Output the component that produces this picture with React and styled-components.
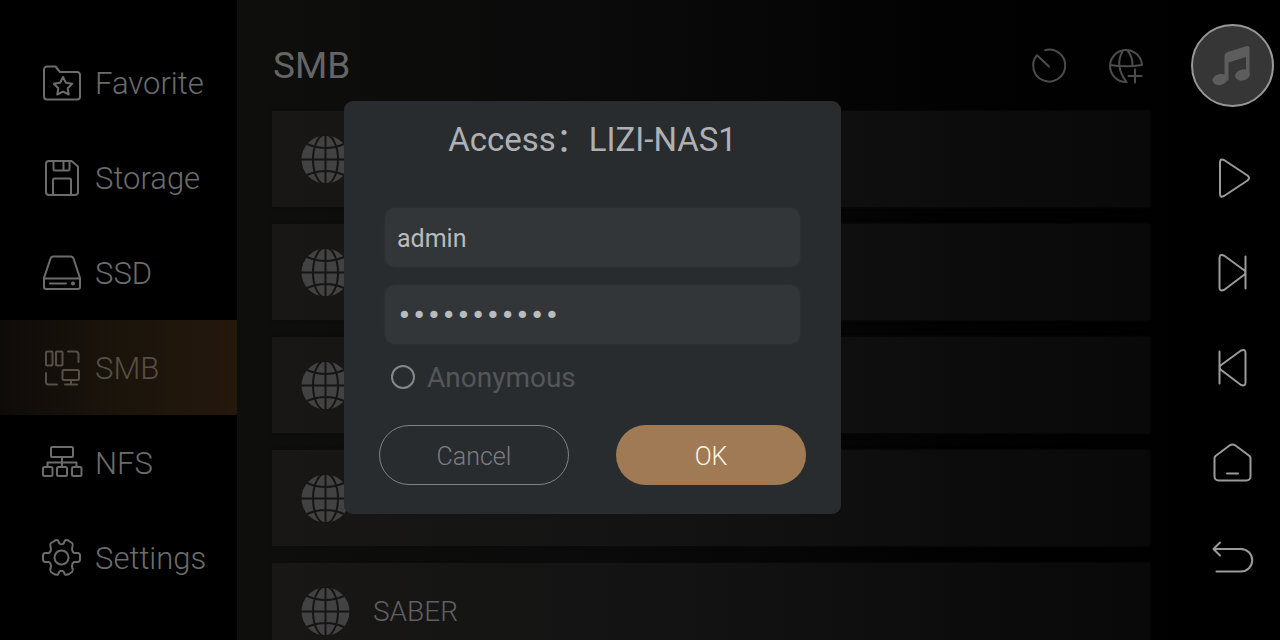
import React, { useState } from 'react';
import styled, { createGlobalStyle } from 'styled-components';

const GlobalStyle = createGlobalStyle`
  * {
    box-sizing: border-box;
  }

  body {
    margin: 0;
    background: #000;
    font-family: Roboto, 'Noto Sans CJK SC', sans-serif;
    font-weight: 300;
  }

  button,
  input {
    font: inherit;
  }
`;

const Screen = styled.div`
  display: flex;
  height: 100vh;
  overflow: hidden;
`;

const Content = styled.div`
  position: relative;
  display: flex;
  flex: 1;
  min-width: 0;
`;

const Sidebar = styled.nav`
  flex: 0 0 237px;
  padding-top: 35px;
`;

const NavItem = styled.a`
  display: flex;
  align-items: center;
  gap: 12px;
  height: 95px;
  padding-left: 41px;
  font-size: 31px;
  color: ${({ $active }) => ($active ? '#574e45' : '#6c6c6c')};
  background: ${({ $active }) => ($active ? 'linear-gradient(90deg, #0f0b09, #1a140b 50%, #25180d)' : 'none')};
  text-decoration: none;
`;

const NavLabel = styled.span`
  padding-top: 2px;
`;

const Icon = styled.svg`
  display: block;
  flex: none;
  fill: none;
  stroke: currentColor;
  stroke-width: 2;
  stroke-linecap: round;
  stroke-linejoin: round;
`;

const Main = styled.main`
  flex: 1;
  min-width: 0;
  padding: 0 35px;
  background: linear-gradient(90deg, #0e0e0d, #0a0a0a 40%, #020202 75%, #000);
`;

const Header = styled.header`
  display: flex;
  align-items: center;
  justify-content: space-between;
  height: 111px;
  padding: 20px 4px 0 1px;
`;

const Title = styled.h1`
  margin: 0;
  font-size: 37px;
  line-height: 46px;
  font-weight: 400;
  color: #656565;
`;

const Actions = styled.div`
  display: flex;
  gap: 37px;
`;

const IconButton = styled.button`
  display: flex;
  align-items: center;
  justify-content: center;
  padding: 0;
  border: 0;
  background: none;
  color: #4c4c4c;
  cursor: pointer;
`;

const List = styled.ul`
  display: flex;
  flex-direction: column;
  gap: 17px;
  margin: 0;
  padding: 0;
  list-style: none;
`;

const ListRow = styled.li`
  display: flex;
  align-items: center;
  gap: 23px;
  height: 96px;
  padding-left: 29px;
  font-size: 28px;
  color: #606060;
  background: linear-gradient(90deg, #181716, #131313 45%, #0b0b0b 85%, #090909);
  box-shadow: 0 0 3px #0e0e0e;
`;

const Dock = styled.aside`
  display: flex;
  flex-direction: column;
  flex: 0 0 95px;
`;

const DockButton = styled(IconButton)`
  height: 95px;
  color: #9a9a9a;
`;

const PlayerButton = styled(IconButton)`
  height: 130px;
`;

const Cover = styled.span`
  display: flex;
  align-items: center;
  justify-content: center;
  width: 83px;
  height: 83px;
  border: 2px solid #979797;
  border-radius: 50%;
  background: #363636;
  color: #5d5d5d;
`;

const Overlay = styled.div`
  position: absolute;
  inset: 0;
  display: flex;
  align-items: center;
  justify-content: center;
  padding-bottom: 25px;
`;

const Dialog = styled.form`
  width: 497px;
  padding: 17px 35px 29px;
  border-radius: 9px;
  background: #292c2f;
`;

const DialogTitle = styled.h2`
  margin: 0 0 46px;
  font-size: 33px;
  line-height: 44px;
  font-weight: 400;
  text-align: center;
  color: #aeb1b4;
`;

const Fields = styled.div`
  display: flex;
  flex-direction: column;
  gap: 18px;
  padding: 0 6px;
`;

const TextField = styled.input`
  width: 100%;
  height: 59px;
  padding: 2px 12px 0;
  border: 0;
  border-radius: 10px;
  outline: 0;
  background: #323639;
  box-shadow: 0 0 3px #323639;
  color: #b9bbbd;
  font-family: ${({ type }) => (type === 'password' ? "'DejaVu Sans', sans-serif" : 'inherit')};
  font-size: 25px;
  font-weight: 400;
`;

const CheckLabel = styled.label`
  display: flex;
  align-items: center;
  gap: 12px;
  height: 34px;
  margin: 16px 0 31px;
  padding-left: 12px;
  font-size: 28px;
  font-weight: 400;
  color: #54575a;
`;

const RoundCheck = styled.input`
  appearance: none;
  width: 24px;
  height: 24px;
  margin: 0;
  border: 2px solid #85888b;
  border-radius: 50%;

  &:checked {
    background: #a07a55;
  }
`;

const Buttons = styled.div`
  display: flex;
  justify-content: space-between;
`;

const DialogButton = styled.button`
  width: 190px;
  height: 60px;
  padding: 2px 0 0;
  border: ${({ $primary }) => ($primary ? '0' : '1px solid #808386')};
  border-radius: 30px;
  background: ${({ $primary }) => ($primary ? '#a07a55' : 'transparent')};
  color: ${({ $primary }) => ($primary ? '#fff3e6' : '#7b7d80')};
  font-size: 25px;
  cursor: pointer;
`;

const FavoriteIcon = () => (
  <Icon width="42" height="42" viewBox="0 0 42 42">
    <path d="M6 4.500h8.500l4.500 5.500h17a3 3 0 0 1 3 3v21.500a3 3 0 0 1-3 3H6a3 3 0 0 1-3-3v-27a3 3 0 0 1 3-3z" />
    <path d="M22 15l2.900 5.700 6.300 1-4.500 4.500 1 6.300-5.700-2.900-5.700 2.900 1-6.300-4.500-4.500 6.300-1z" />
  </Icon>
);

const StorageIcon = () => (
  <Icon width="42" height="42" viewBox="0 0 42 42">
    <path d="M8 4h22.500l6.500 5.500V35a3 3 0 0 1-3 3H8a3 3 0 0 1-3-3V7a3 3 0 0 1 3-3z" />
    <path d="M12.500 4v8a1.500 1.500 0 0 0 1.500 1.500h13a1.500 1.500 0 0 0 1.500-1.500V4M22.500 4v9.500M12 38V23a1.500 1.500 0 0 1 1.500-1.500h15a1.500 1.500 0 0 1 1.500 1.500v15" />
  </Icon>
);

const SsdIcon = () => (
  <Icon width="42" height="42" viewBox="0 0 42 42">
    <path d="M3 26L9.500 6.500a3 3 0 0 1 2.500-2h18a3 3 0 0 1 2.500 2L39 26v9a2 2 0 0 1-2 2H5a2 2 0 0 1-2-2zM3 26.500h36M9 31.500h16" />
    <circle cx="32" cy="31.500" r="1" />
  </Icon>
);

const SmbIcon = () => (
  <Icon width="42" height="42" viewBox="0 0 42 42">
    <rect x="5" y="4.500" width="6.500" height="14" rx="1" />
    <rect x="15" y="4.500" width="6.500" height="14" rx="1" />
    <path d="M27 4.500h7.500a3 3 0 0 1 3 3V15M5 26v9a2.500 2.500 0 0 0 2.500 2.500H16M24 37.500h12M30 33.500v4" />
    <rect x="21.500" y="23" width="16.500" height="10" rx="1.500" />
  </Icon>
);

const NfsIcon = () => (
  <Icon width="42" height="42" viewBox="0 0 42 42">
    <rect x="10" y="5" width="22" height="10" rx="1" />
    <rect x="2" y="25" width="9.500" height="9" rx="1.500" />
    <rect x="16" y="25" width="10" height="9" rx="1.500" />
    <rect x="31" y="25" width="9.500" height="9" rx="1.500" />
    <path d="M21 15v10M6.500 25v-4.500h29V25" />
  </Icon>
);

const SettingsIcon = () => (
  <Icon width="42" height="42" viewBox="0 0 42 42">
    <circle cx="20.500" cy="20.500" r="7" />
    <path d="M13.500 4Q15 2.500 17 3.500l1.500 3q2 1.500 4 0L24 3.500q2-1 4 .5l3 2q1.500 1.500.500 3.500-1.500 4 1.500 6.500h4q2 .5 2 2.500v4q0 2-2 2.500h-4q-3 2.500-1.500 6.500 1 2-.500 3.500l-3 2q-2 1-4 .5L22.500 34.500q-2-1.500-4 0L17 37.500q-2 .5-4-.5l-3-2Q8.500 33.500 9.500 31.500q1.500-4-1.500-6.500H4Q2 24.500 2 22.500v-4q0-2 2-2.500h4Q11 13.500 9.500 9.500q-1-2 .5-3.500z" />
  </Icon>
);

const GlobeIcon = () => (
  <svg width="49" height="49" viewBox="0 0 49 49">
    <circle cx="24.500" cy="24.500" r="24" fill="#424242" />
    <g fill="none" stroke="#151515" strokeWidth="2">
      <path d="M24.500 0v49M0 24.500h49M6 9q18.500 8 37 0M6 40q18.500-8 37 0" />
      <ellipse cx="24.500" cy="24.500" rx="12.500" ry="25" />
    </g>
  </svg>
);

const TimerIcon = () => (
  <Icon width="40" height="40" viewBox="0 0 40 40">
    <path d="M16 4.100A16 16 0 1 1 8 9.200L20 20.500" />
  </Icon>
);

const AddGlobeIcon = () => (
  <Icon width="40" height="40" viewBox="0 0 40 40">
    <path d="M20.500 36A16 16 0 1 1 36 19q-16 2.500-32 0M17 4.500q-9 15 3.500 31.500M21.500 4.500q5 6 5 14.500M29 23.500v13M22.500 30h13" />
  </Icon>
);

const MusicIcon = () => (
  <svg width="42" height="42" viewBox="0 0 42 42" fill="currentColor">
    <path d="M12.500 12q0-3 3-4l19.500-6q2.500-.5 2.500 2v27h-3.500V13l-17.500 5.500v18h-4z" />
    <ellipse cx="8" cy="35.500" rx="7.500" ry="5.500" transform="rotate(-14 8 35.500)" />
    <ellipse cx="30.500" cy="31" rx="7.500" ry="5.500" transform="rotate(-14 30.500 31)" />
  </svg>
);

const PlayIcon = () => (
  <Icon width="42" height="42" viewBox="0 0 42 42">
    <path d="M8 5q0-3.500 4-2l23.500 15.500q3 2.500 0 5L12 39q-4 2-4-2z" />
  </Icon>
);

const NextIcon = () => (
  <Icon width="42" height="42" viewBox="0 0 42 42">
    <path d="M7.500 6q0-4.500 4.500-2.500l20.500 15q2 2 0 4L12 38q-4.500 1.500-4.500-2.500zM33.500 4.500v32" />
  </Icon>
);

const PreviousIcon = () => (
  <Icon width="42" height="42" viewBox="0 0 42 42">
    <path d="M33.500 6q0-4.500-4.500-2.500L8.500 18.500q-2 2 0 4L29 38q4.500 1.500 4.500-2.500zM7.500 4.500v32" />
  </Icon>
);

const HomeIcon = () => (
  <Icon width="42" height="42" viewBox="0 0 42 42">
    <path d="M3.500 14L17.500 3.500q3-2 6 0L37.500 14q1 1 1 2v18.500a4 4 0 0 1-4 4h-28a4 4 0 0 1-4-4V16q0-1 1-2zM15 31.500h11" />
  </Icon>
);

const BackIcon = () => (
  <Icon width="42" height="42" viewBox="0 0 42 42">
    <path d="M8 5.500L1.500 12 8 18.500M1.500 12H29a11 11 0 0 1 0 22.500H4.500" />
  </Icon>
);

const sections = [
  { name: 'Favorite', icon: FavoriteIcon },
  { name: 'Storage', icon: StorageIcon },
  { name: 'SSD', icon: SsdIcon },
  { name: 'SMB', icon: SmbIcon },
  { name: 'NFS', icon: NfsIcon },
  { name: 'Settings', icon: SettingsIcon },
];

const controls = [
  { name: 'Play', icon: PlayIcon },
  { name: 'Next', icon: NextIcon },
  { name: 'Previous', icon: PreviousIcon },
  { name: 'Home', icon: HomeIcon },
  { name: 'Back', icon: BackIcon },
];

const servers = ['', '', '', '', 'SABER'];

const AccessDialog = ({ server }) => {
  const [user, setUser] = useState('admin');
  const [password, setPassword] = useState('password123');
  const [anonymous, setAnonymous] = useState(false);

  return (
    <Overlay>
      <Dialog role="dialog" aria-labelledby="access-title" onSubmit={e => e.preventDefault()}>
        <DialogTitle id="access-title">{`Access：${server}`}</DialogTitle>
        <Fields>
          <TextField
            type="text"
            aria-label="User name"
            value={user}
            onChange={e => setUser(e.target.value)}
          />
          <TextField
            type="password"
            aria-label="Password"
            value={password}
            onChange={e => setPassword(e.target.value)}
          />
        </Fields>
        <CheckLabel>
          <RoundCheck
            type="checkbox"
            checked={anonymous}
            onChange={e => setAnonymous(e.target.checked)}
          />
          Anonymous
        </CheckLabel>
        <Buttons>
          <DialogButton type="button">Cancel</DialogButton>
          <DialogButton type="submit" $primary>OK</DialogButton>
        </Buttons>
      </Dialog>
    </Overlay>
  );
};

const App = () => (
  <Screen>
    <GlobalStyle />
    <Content>
      <Sidebar>
        {sections.map(({ name, icon: SectionIcon }) => (
          <NavItem key={name} href={`#${name.toLowerCase()}`} $active={name === 'SMB'}>
            <SectionIcon />
            <NavLabel>{name}</NavLabel>
          </NavItem>
        ))}
      </Sidebar>
      <Main>
        <Header>
          <Title>SMB</Title>
          <Actions>
            <IconButton type="button" aria-label="Timer"><TimerIcon /></IconButton>
            <IconButton type="button" aria-label="Add server"><AddGlobeIcon /></IconButton>
          </Actions>
        </Header>
        <List>
          {servers.map((name, index) => (
            // eslint-disable-next-line react/no-array-index-key
            <ListRow key={index}>
              <GlobeIcon />
              {name}
            </ListRow>
          ))}
        </List>
      </Main>
      <AccessDialog server="LIZI-NAS1" />
    </Content>
    <Dock>
      <PlayerButton type="button" aria-label="Now playing">
        <Cover><MusicIcon /></Cover>
      </PlayerButton>
      {controls.map(({ name, icon: ControlIcon }) => (
        <DockButton key={name} type="button" aria-label={name}>
          <ControlIcon />
        </DockButton>
      ))}
    </Dock>
  </Screen>
);

export default App;
